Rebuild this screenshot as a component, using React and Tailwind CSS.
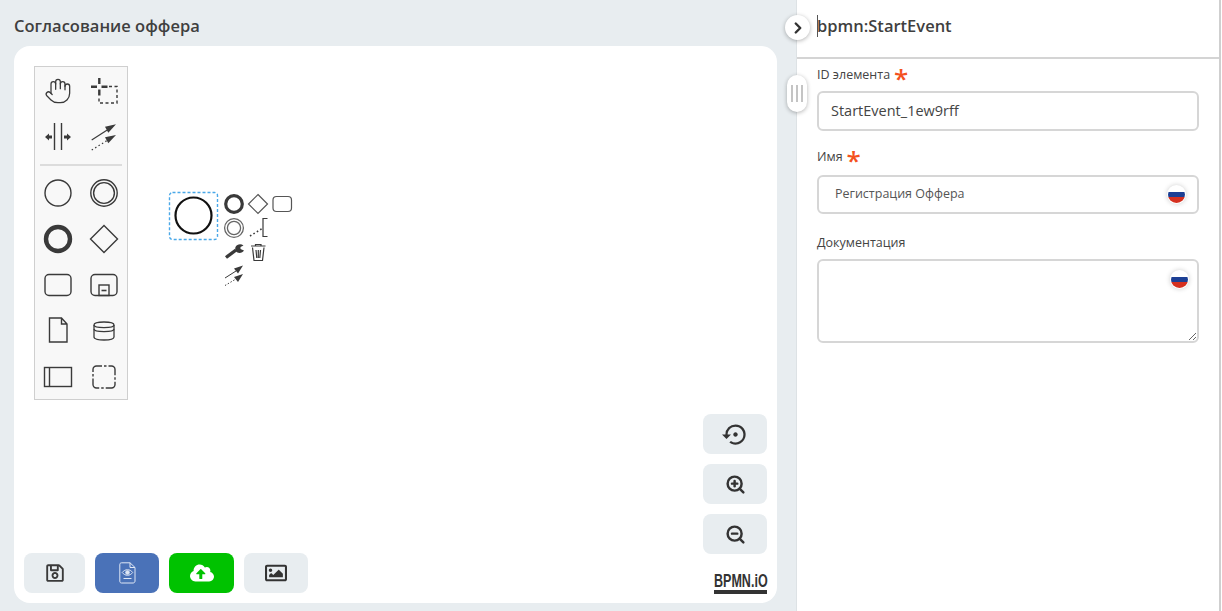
import React from "react";
import { FaCloudUploadAlt, FaRegImage, FaRegSave } from "react-icons/fa";
import { MdSettingsBackupRestore } from "react-icons/md";
import { ChevronRight, Hand, ZoomIn, ZoomOut } from "lucide-react";

const INK = "#3a3a3a";

// Palette glyphs, each drawn in a 46x46 cell
const Cell = ({ children }) => (
	<svg width="46" height="46" viewBox="0 0 46 46" fill="none" stroke={INK} strokeWidth="1.4">
		{children}
	</svg>
);

const Connect = () => (
	<g>
		<path d="M10.7 26 L27 15.5" strokeWidth="1.2" />
		<path d="M35 10.3 L24 12.7 L27.3 18.7 Z" fill={INK} stroke="none" />
		<path d="M10.7 36 L27 26" strokeWidth="1.2" strokeDasharray="1.5 2.5" />
		<path d="M35 21 L24 23.3 L27.3 29.3 Z" fill={INK} stroke="none" />
	</g>
);

const paletteTools = [
	<foreignObject key="hand" x="9" y="9" width="28" height="28">
		<Hand size={28} strokeWidth={1.1} color={INK} />
	</foreignObject>,
	<g key="lasso">
		<path d="M18.3 10 V16 M18.3 21.5 V27.5 M10 18.7 H16 M20.5 18.7 H26.5" strokeWidth="2.4" />
		<path d="M28 18.5 H36 V35 H18 V29" strokeDasharray="3 2.5" />
	</g>,
	<g key="space">
		<path d="M19.5 9 V36 M26.5 9 V36" />
		<path d="M10 23 L14 19.5 V21.5 H17 V24.5 H14 V26.5 Z M36 23 L32 19.5 V21.5 H29 V24.5 H32 V26.5 Z" fill={INK} stroke="none" />
	</g>,
	<Connect key="connect" />,
];

const paletteShapes = [
	<circle key="start" cx="23" cy="23" r="13" />,
	<g key="intermediate">
		<circle cx="23" cy="23" r="13.2" />
		<circle cx="23" cy="23" r="10.4" />
	</g>,
	<circle key="end" cx="23" cy="23" r="12" strokeWidth="4.4" />,
	<path key="gateway" d="M23 9.5 L36.5 23 L23 36.5 L9.5 23 Z" />,
	<rect key="task" x="10" y="12.5" width="26" height="21" rx="4" />,
	<g key="subprocess">
		<rect x="10" y="12.5" width="26" height="21" rx="4" />
		<rect x="18" y="23" width="10" height="10.5" />
		<path d="M20.5 28.5 H25.5" strokeWidth="1.6" />
	</g>,
	<path key="data" d="M14.5 10 H26.5 L32 16 V34 H14.5 Z M26.5 10 V16 H32" />,
	<g key="store" strokeWidth="1.3">
		<path d="M13 17 C13 13 33 13 33 17 V29 C33 33 13 33 13 29 Z" />
		<path d="M13 17 C13 20.5 33 20.5 33 17 M13 21 C13 24.5 33 24.5 33 21" />
	</g>,
	<g key="pool">
		<rect x="9.5" y="13.5" width="27" height="19" />
		<path d="M14.5 13.5 V32.5" />
	</g>,
	<rect key="group" x="12" y="12" width="22" height="22" rx="3.5" strokeDasharray="14 2 2.5 2" strokeDashoffset="8.5" />,
];

const Diagram = () => (
	<svg width="140" height="110" viewBox="160 180 140 110" fill="none" stroke={INK}>
		{/* selected start event */}
		<rect x="169.5" y="192.5" width="48" height="47" rx="3" stroke="#4aa8e8" strokeDasharray="3 2" strokeWidth="1.4" />
		<circle cx="193.5" cy="215.5" r="18" stroke="#111" strokeWidth="2.2" />

		{/* context pad */}
		<circle cx="234" cy="204" r="8.3" strokeWidth="3.2" />
		<path d="M258 194.5 L267.5 204 L258 213.5 L248.5 204 Z" strokeWidth="1.2" stroke="#555" />
		<rect x="273" y="196.5" width="18.5" height="15" rx="3.5" strokeWidth="1.2" stroke="#555" />
		<circle cx="234" cy="228" r="9.4" strokeWidth="1.3" stroke="#666" />
		<circle cx="234" cy="228" r="6.6" strokeWidth="1.3" stroke="#666" />
		<path d="M250 236 L263 228" strokeDasharray="1.6 2.4" strokeWidth="1.6" />
		<path d="M267.5 218.5 H263 V236.5 H267.5" strokeWidth="1.2" />
		<path d="M226 257.5 L236 250" strokeWidth="3.4" />
		<path d="M243.5 245.5 C241 243.5 237 244 235.5 247 C234.5 250 236.5 253 239.5 253 C241.5 253 243 252 244 250.5 L240.5 249 L240.5 247 Z" fill={INK} stroke="none" />
		<path d="M252.5 247.5 L254 260.5 H262.5 L264 247.5 M251 246 H265.5 M255.5 246 V244.5 H261 V246 M256 250 L256.8 258 M258.3 250 V258 M260.5 250 L259.8 258" strokeWidth="1.2" />
		<path d="M225 278 L236 271" strokeWidth="1" />
		<path d="M243 265.5 L234 268.5 L238 273.5 Z" fill={INK} stroke="none" />
		<path d="M225 285.5 L236 279" strokeDasharray="1.4 1.8" strokeWidth="1" />
		<path d="M243 274 L234 277 L238 282 Z" fill={INK} stroke="none" />
	</svg>
);

const PreviewIcon = () => (
	<svg width="17" height="22" viewBox="0 0 17 22" fill="none" stroke="#dfe7f5" strokeWidth="1">
		<path d="M2.5 0.8 H11 L16 5.5 V19 C16 20.2 15.2 21 14 21 H2.5 C1.3 21 0.8 20.2 0.8 19 V2.8 C0.8 1.6 1.3 0.8 2.5 0.8 Z M11 0.8 V5.5 H16" />
		<path d="M3.2 10.5 C6 6.8 11 6.8 13.7 10.5 C11 14.2 6 14.2 3.2 10.5 Z" />
		<circle cx="8.5" cy="10.5" r="1.8" fill="#dfe7f5" />
		<path d="M4.5 16.5 H12.5" />
	</svg>
);

const ActionButton = ({ width, color, children }) => (
	<button className={`h-10 flex items-center justify-center rounded-lg ${width} ${color}`}>
		{children}
	</button>
);

const ZoomButton = ({ children }) => (
	<button className="w-16 h-10 flex items-center justify-center rounded-lg bg-[#e8edf0] text-[#333]">
		{children}
	</button>
);

const Flag = ({ className }) => (
	<span className={`absolute w-[19px] h-[19px] rounded-full bg-white shadow-[0_0_5px_rgba(0,0,0,0.2)] p-px ${className}`}>
		<span className="flex flex-col w-full h-full rounded-full overflow-hidden">
			<span className="flex-1 bg-white"></span>
			<span className="flex-1 bg-[#1c3f94]"></span>
			<span className="flex-1 bg-[#d5301f]"></span>
		</span>
	</span>
);

const Label = ({ children, required }) => (
	<div className="flex items-center h-[18px] text-[12.5px] font-medium text-[#444]">
		{children}
		{required && <span className="ml-1 text-[26px] font-semibold leading-none text-[#f4511e] h-[20px]">*</span>}
	</div>
);

export default function App() {
	return (
		<div className="relative flex h-[611px] w-[1222px] overflow-hidden bg-white font-['Open_Sans',sans-serif]">
			{/* Left: diagram editor */}
			<div className="flex flex-col w-[797px] shrink-0 bg-[#e8edf0] pl-[14px] pr-[19px] pb-2 border-r border-[#dde2e5]">
				<h1 className="h-[46px] flex items-center pt-[6px] text-[16.5px] font-semibold text-[#3f3f3f]">
					Согласование оффера
				</h1>
				<div className="flex-1 flex flex-col justify-between bg-white rounded-2xl">
					<div className="flex items-start pt-5 pl-5">
						<div className="w-[94px] h-[334px] bg-[#f8f8f8] border border-[#cfcfcf] pt-px">
							<div className="grid grid-cols-2 w-[92px]">
								{paletteTools.map((tool, i) => (
									<Cell key={i}>{tool}</Cell>
								))}
							</div>
							<div className="h-[2px] bg-[#dcdcdc] mx-[5px] mt-1 mb-1"></div>
							<div className="grid grid-cols-2 w-[92px]">
								{paletteShapes.map((shape, i) => (
									<Cell key={i}>{shape}</Cell>
								))}
							</div>
						</div>
						<div className="ml-8 mt-[114px]">
							<Diagram />
						</div>
					</div>

					<div className="flex items-end justify-between pl-[10px] pr-[10px] pb-[9px]">
						<div className="flex gap-[10px] pb-px">
							<ActionButton width="w-[61px]" color="bg-[#e8edf0]">
								<FaRegSave size={20} color="#3a3a3a" />
							</ActionButton>
							<ActionButton width="w-16" color="bg-[#4a72b8]">
								<PreviewIcon />
							</ActionButton>
							<ActionButton width="w-[65px]" color="bg-[#00c200]">
								<FaCloudUploadAlt size={24} color="#fff" />
							</ActionButton>
							<ActionButton width="w-16" color="bg-[#e8edf0]">
								<FaRegImage size={22} color="#333" />
							</ActionButton>
						</div>
						<div className="flex flex-col items-end gap-[10px]">
							<ZoomButton>
								<MdSettingsBackupRestore size={27} />
							</ZoomButton>
							<ZoomButton>
								<ZoomIn size={21} strokeWidth={2.8} />
							</ZoomButton>
							<ZoomButton>
								<ZoomOut size={21} strokeWidth={2.8} />
							</ZoomButton>
							<div className="w-[53px] mt-2 border-b-4 border-[#333] h-[22px] overflow-visible">
								<div className="origin-left scale-x-[0.66] whitespace-nowrap font-['Liberation_Sans',sans-serif] font-bold text-[19px] leading-[18px] text-[#333]">
									BPMN.iO
								</div>
							</div>
						</div>
					</div>
				</div>
			</div>

			{/* Right: properties */}
			<div className="flex-1 flex flex-col border-r-2 border-[#cfcfcf] mr-px">
				<div className="h-[59px] shrink-0 flex items-center pl-5 pb-[5px] border-b-2 border-[#d4d4d4]">
					<span className="relative text-[16.5px] font-semibold text-[#3f3f3f] leading-[22px]">
						<span className="absolute left-0 top-0 w-px h-[22px] bg-[#555]"></span>
						bpmn:StartEvent
					</span>
				</div>
				<div className="flex flex-col pl-5 pr-5 pt-[7px]">
					<Label required>ID элемента</Label>
					<input
						readOnly
						value="StartEvent_1ew9rff"
						className="mt-[7px] h-10 w-[382px] px-3 pb-[2px] border-2 border-[#d6d6d6] rounded-md text-[14.5px] font-medium text-[#444] outline-none"
					/>
					<div className="mt-[17px]">
						<Label required>Имя</Label>
					</div>
					<div className="relative mt-[9px] w-[382px]">
						<input
							readOnly
							value="Регистрация Оффера"
							className="block h-[39px] w-full pl-4 pr-10 pb-[2px] border-2 border-[#d6d6d6] rounded-md text-[12.5px] font-medium text-[#555] outline-none"
						/>
						<Flag className="top-[10px] right-[13px]" />
					</div>
					<div className="mt-5">
						<Label>Документация</Label>
					</div>
					<div className="relative mt-[7px] w-[382px]">
						<textarea
							readOnly
							className="block h-[84px] w-full border-2 border-[#d6d6d6] rounded-md outline-none resize-y"
						/>
						<Flag className="top-[11px] right-[10px]" />
					</div>
				</div>
			</div>

			{/* Collapse toggle and resize handle sit on the panel edge */}
			<button className="absolute left-[785px] top-[15px] w-[25px] h-[25px] flex items-center justify-center rounded-full bg-white shadow-[0_1px_4px_rgba(0,0,0,0.3)]">
				<ChevronRight size={18} strokeWidth={3.2} color="#333" className="ml-px" />
			</button>
			<div className="absolute left-[787px] top-[75px] w-5 h-[37px] flex items-center justify-center gap-[3px] rounded-full bg-white shadow-[0_1px_4px_rgba(0,0,0,0.3)]">
				<span className="w-[2px] h-[17px] bg-[#c4c4c4]"></span>
				<span className="w-[2px] h-[17px] bg-[#c4c4c4]"></span>
				<span className="w-[2px] h-[17px] bg-[#c4c4c4]"></span>
			</div>
		</div>
	);
}
